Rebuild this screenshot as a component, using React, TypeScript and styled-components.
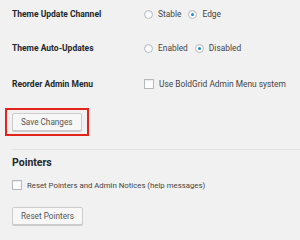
import { createGlobalStyle, styled } from "styled-components";

const GlobalStyle = createGlobalStyle`
  html, body {
    margin: 0;
    padding: 0;
    background: #f1f1f1;
  }
  body {
    font-family: Roboto, "Liberation Sans", sans-serif;
    color: #32373c;
  }
`;

type Choice = { label: string; checked?: boolean };

const RadioGroup = ({ choices }: { choices: Choice[] }): JSX.Element => (
  <Options>
    {choices.map((c) => (
      <Option key={c.label}>
        <Radio checked={c.checked} />
        <OptionText>{c.label}</OptionText>
      </Option>
    ))}
  </Options>
);

export default function App(): JSX.Element {
  return (
    <>
      <GlobalStyle />
      <Page>
        <FormTable>
          <Row>
            <Label>Theme Update Channel</Label>
            <RadioGroup choices={[{ label: "Stable" }, { label: "Edge", checked: true }]} />
          </Row>
          <Row>
            <Label>Theme Auto-Updates</Label>
            <RadioGroup
              choices={[{ label: "Enabled" }, { label: "Disabled", checked: true }]}
            />
          </Row>
          <Row>
            <Label>Reorder Admin Menu</Label>
            <Option>
              <Checkbox />
              <OptionText>Use BoldGrid Admin Menu system</OptionText>
            </Option>
          </Row>
        </FormTable>
        <Highlight>
          <Button>Save Changes</Button>
        </Highlight>
        <Divider />
        <Heading>Pointers</Heading>
        <CheckRow>
          <Checkbox />
          <OptionText small>Reset Pointers and Admin Notices (help messages)</OptionText>
        </CheckRow>
        <Button>Reset Pointers</Button>
      </Page>
    </>
  );
}

const Page = styled.div`
  padding: 0 0 0 12px;
  width: 288px;
  height: 240px;
  overflow: hidden;
`;

const FormTable = styled.div`
  display: flex;
  flex-direction: column;
  padding-top: 4px;
`;

const Row = styled.div`
  display: grid;
  grid-template-columns: 132px 1fr;
  align-items: center;
  height: 20px;
  &:nth-child(1) {
    margin: 0 0 14px;
  }
  &:nth-child(2) {
    margin: 0 0 16px;
  }
  &:nth-child(3) {
    margin: 0 0 14px;
  }
`;

const Label = styled.div`
  font-size: 8.5px;
  font-weight: 700;
  color: #23282d;
`;

const Options = styled.div`
  display: flex;
  align-items: center;
  gap: 7px;
`;

const Option = styled.label`
  display: flex;
  align-items: center;
  gap: 5px;
`;

const OptionText = styled.span<{ small?: boolean }>`
  font-size: ${(p) => (p.small ? "7.8px" : "8.4px")};
  color: #444;
`;

const Radio = styled.span<{ checked?: boolean }>`
  box-sizing: border-box;
  width: 9px;
  height: 9px;
  border-radius: 50%;
  border: 1px solid #b4b9be;
  background: #fff;
  box-shadow: inset 0 1px 1px rgba(0, 0, 0, 0.08);
  display: flex;
  align-items: center;
  justify-content: center;
  &::after {
    content: "";
    width: 3px;
    height: 3px;
    border-radius: 50%;
    background: ${(p) => (p.checked ? "#1e8cbe" : "transparent")};
  }
`;

const Checkbox = styled.span`
  box-sizing: border-box;
  width: 10px;
  height: 10px;
  border: 1px solid #b4b9be;
  background: #fff;
  box-shadow: inset 0 1px 1px rgba(0, 0, 0, 0.08);
`;

const Highlight = styled.div`
  display: inline-block;
  margin: 0 0 0 -7px;
  padding: 3px 5px;
  border: 2px solid #e4231b;
`;

const Button = styled.button`
  display: block;
  box-sizing: border-box;
  height: 18px;
  padding: 0 8px;
  font-family: Roboto, "Liberation Sans", sans-serif;
  font-size: 8.2px;
  color: #555;
  background: #f7f7f7;
  border: 1px solid #ccc;
  border-radius: 2px;
  box-shadow: 0 1px 0 #ccc;
`;

const Divider = styled.hr`
  margin: 13px 0 0;
  border: 0;
  border-top: 1px solid #e2e2e2;
`;

const Heading = styled.h2`
  margin: 6px 0 0;
  font-size: 10.5px;
  font-weight: 700;
  color: #23282d;
`;

const CheckRow = styled.label`
  display: flex;
  align-items: center;
  gap: 5px;
  margin: 11px 0 17px;
`;
